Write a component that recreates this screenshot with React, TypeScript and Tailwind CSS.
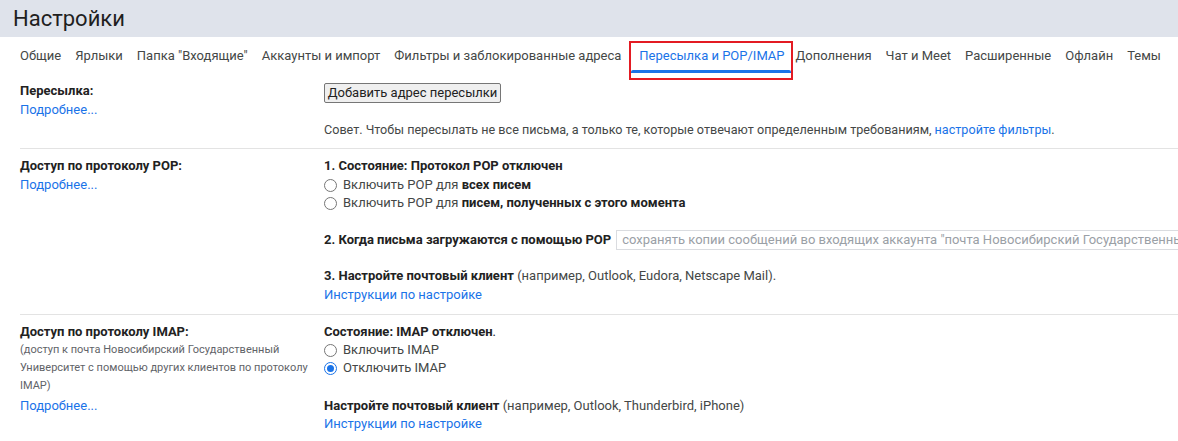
import React from "react";

const tabs = [
  "Общие",
  "Ярлыки",
  'Папка "Входящие"',
  "Аккаунты и импорт",
  "Фильтры и заблокированные адреса",
  "Пересылка и POP/IMAP",
  "Дополнения",
  "Чат и Meet",
  "Расширенные",
  "Офлайн",
  "Темы",
];

function Radio({ checked, children }: { checked?: boolean; children: React.ReactNode }) {
  return (
    <div className="flex items-center h-[18px]">
      {checked ? (
        <span className="w-[13px] h-[13px] rounded-full border-[1.5px] border-[#1a73e8] flex items-center justify-center shrink-0">
          <span className="w-[7px] h-[7px] rounded-full bg-[#1a73e8]" />
        </span>
      ) : (
        <span className="w-[13px] h-[13px] rounded-full border border-[#767676] bg-white shrink-0" />
      )}
      <span className="ml-[6px] text-[#444746]">{children}</span>
    </div>
  );
}

function Link({ children }: { children: React.ReactNode }) {
  return <span className="text-[#1a73e8]">{children}</span>;
}

export default function App() {
  return (
    <div
      className="w-[1178px] h-[441px] overflow-hidden bg-white text-[13px] leading-[18px] text-[#222]"
      style={{ fontFamily: "Roboto, 'Noto Sans', Arial, sans-serif" }}
    >
      {/* Header */}
      <div className="h-[37px] bg-[#dfe3eb] flex items-center pl-[13px]">
        <span className="text-[22px] text-[#1f1f1f] leading-none">Настройки</span>
      </div>

      {/* Tabs */}
      <div className="h-[40px] flex items-start pl-[13px] whitespace-nowrap">
        {tabs.map((t) => {
          const active = t === "Пересылка и POP/IMAP";
          return (
            <div
              key={t}
              className={
                "relative h-[36px] pt-[2px] flex items-center text-[13px] " +
                (active
                  ? "pl-[10px] pr-[8px] text-[#1a73e8] ml-[1px] mr-[-4px]"
                  : "px-[7px] text-[#444746]")
              }
            >
              {t}
              {active && (
                <>
                  <span className="absolute left-[2px] right-[2px] bottom-0 h-[3px] bg-[#1a73e8] rounded-t-[2px]" />
                  <span className="absolute left-0 right-0 top-[4px] h-[39px] border-2 border-[#e31b23] pointer-events-none" />
                </>
              )}
            </div>
          );
        })}
      </div>

      {/* Content */}
      <div className="pl-[20px]">
        {/* Section 1 */}
        <div className="flex pt-[5px] pb-[9px]">
          <div className="w-[304px] shrink-0">
            <div className="font-bold text-[#222]">Пересылка:</div>
            <div className="mt-[1px]">
              <Link>Подробнее...</Link>
            </div>
          </div>
          <div>
            <div className="mt-[1px] h-[20px] w-[177px] bg-[#efefef] border border-[#767676] rounded-[2px] flex items-center justify-center text-[#222] text-[13px]">
              Добавить адрес пересылки
            </div>
            <div className="mt-[18px] text-[#444746] whitespace-nowrap text-[12.6px]">
              Совет. Чтобы пересылать не все письма, а только те, которые отвечают определенным требованиям,{" "}
              <Link>настройте фильтры</Link>.
            </div>
          </div>
        </div>

        {/* Section 2 */}
        <div className="flex border-t border-[#e3e3e3] pt-[8px] pb-[10px]">
          <div className="w-[304px] shrink-0">
            <div className="font-bold">Доступ по протоколу POP:</div>
            <div className="mt-[1px]">
              <Link>Подробнее...</Link>
            </div>
          </div>
          <div className="flex-1 min-w-0">
            <div className="font-bold">1. Состояние: Протокол POP отключен</div>
            <div className="mt-[1px]">
              <Radio>
                Включить POP для <b className="text-[#222]">всех писем</b>
              </Radio>
              <Radio>
                Включить POP для <b className="text-[#222]">писем, полученных с этого момента</b>
              </Radio>
            </div>
            <div className="mt-[18px] flex items-center whitespace-nowrap">
              <b>2. Когда письма загружаются с помощью POP</b>
              <div className="ml-[5px] h-[20px] border border-[#dadce0] pl-[5px] flex items-center text-[#9aa0a6] w-[700px] shrink-0 overflow-hidden">
                сохранять копии сообщений во входящих аккаунта "почта Новосибирский Государственный Университет"
              </div>
            </div>
            <div className="mt-[17px] whitespace-nowrap">
              <b>3. Настройте почтовый клиент</b>{" "}
              <span className="text-[#444746]">(например, Outlook, Eudora, Netscape Mail).</span>
            </div>
            <div className="mt-[1px]">
              <Link>Инструкции по настройке</Link>
            </div>
          </div>
        </div>

        {/* Section 3 */}
        <div className="flex border-t border-[#e3e3e3] pt-[8px]">
          <div className="w-[304px] shrink-0">
            <div className="font-bold">Доступ по протоколу IMAP:</div>
            <div className="text-[11px] text-[#5f6368] w-[290px]">
              (доступ к почта Новосибирский Государственный Университет с помощью других клиентов по протоколу IMAP)
            </div>
            <div className="mt-[2px]">
              <Link>Подробнее...</Link>
            </div>
          </div>
          <div>
            <div className="font-bold">
              Состояние: IMAP отключен<span className="font-normal">.</span>
            </div>
            <Radio>Включить IMAP</Radio>
            <Radio checked>Отключить IMAP</Radio>
            <div className="mt-[20px] whitespace-nowrap">
              <b>Настройте почтовый клиент</b>{" "}
              <span className="text-[#444746]">(например, Outlook, Thunderbird, iPhone)</span>
            </div>
            <div>
              <Link>Инструкции по настройке</Link>
            </div>
          </div>
        </div>
      </div>
    </div>
  );
}
